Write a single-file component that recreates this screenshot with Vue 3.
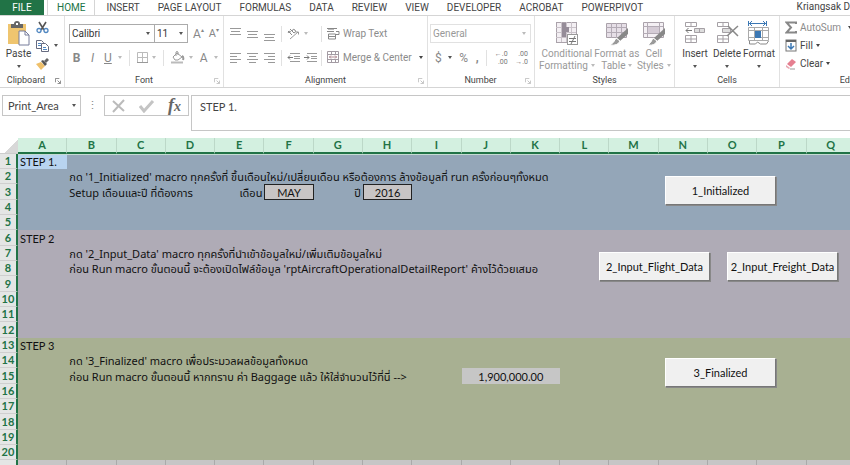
<template>
  <div class="excel">
    <nav class="tabs">
      <button class="tab file">FILE</button>
      <button
          v-for="tab in tabs"
          :key="tab"
          class="tab"
          :class="{ active: activeTab === tab }"
          @click="activeTab = tab"
      >
        {{ tab }}
      </button>
      <span class="user">Kriangsak D</span>
    </nav>

    <div class="ribbon">
      <section class="group clipboard">
        <div class="body">
          <button class="big paste">
            <svg width="24" height="26" viewBox="0 0 24 26">
              <rect x="1" y="3" width="18" height="20" fill="#efc56f" />
              <path d="M4 3h3q0-3 3-3t3 3h3v4H4z" fill="#666" />
              <rect x="9" y="2" width="2" height="2" fill="#fff" />
              <path d="M12 10h6l4 4v10H12z" fill="#fff" stroke="#777c9a" />
              <path d="M18 10v4h4" fill="none" stroke="#777c9a" />
            </svg>
            <span>Paste</span>
            <i class="caret"></i>
          </button>
          <div class="stack">
            <button class="tool" aria-label="Cut">
              <svg width="13" height="13" viewBox="0 0 13 13" fill="none">
                <path d="M3 1l5 8M10 1L5 9" stroke="#555" stroke-width="1.6" />
                <circle cx="3" cy="9.500" r="2" stroke="#4f86c0" stroke-width="1.300" />
                <circle cx="10" cy="9.500" r="2" stroke="#4f86c0" stroke-width="1.300" />
              </svg>
            </button>
            <button class="tool" aria-label="Copy">
              <svg width="13" height="13" viewBox="0 0 13 13" fill="#fff" stroke="#666b80">
                <path d="M.5 1.500h5l2 2v6h-7z" />
                <path d="M2 4.500h3M2 6.500h3" stroke="#4f86c0" />
                <path d="M5.500 4.500h4l3 3v5h-7z" />
                <path d="M7 8.500h3M7 10.500h4" stroke="#4f86c0" />
              </svg>
              <i class="caret"></i>
            </button>
            <button class="tool" aria-label="Format Painter">
              <svg width="13" height="13" viewBox="0 0 13 13">
                <path d="M0 7l5-2 4 4-4 4z" fill="#efc06a" />
                <path d="M5 4l2-1 4 4-2 2z" fill="#555" />
                <path d="M8 4l3-3 2 2-3 3z" fill="#666" />
              </svg>
            </button>
          </div>
        </div>
        <h2>Clipboard</h2>
        <svg class="launcher dark" viewBox="0 0 7 7"><path :d="launcher" /></svg>
      </section>

      <section class="group font">
        <div class="body rows">
          <div class="line">
            <div class="combo font-name">
              <select aria-label="Font"><option>Calibri</option></select>
              <i class="caret"></i>
            </div>
            <div class="combo font-size">
              <select aria-label="Font Size"><option>11</option></select>
              <i class="caret"></i>
            </div>
            <button class="tool letter grow" aria-label="Increase Font Size">A<sup>▴</sup></button>
            <button class="tool letter shrink" aria-label="Decrease Font Size">A<sup>▾</sup></button>
          </div>
          <div class="line formats">
            <button class="tool letter"><b>B</b></button>
            <button class="tool letter"><em>I</em></button>
            <button class="tool letter"><u>U</u><i class="caret pale"></i></button>
            <i class="bar"></i>
            <button class="tool" aria-label="Borders">
              <svg width="11" height="11" viewBox="0 0 11 11" fill="none" stroke="#aaa">
                <path d="M.5 .5h10v10h-10zM5.500 0v11M0 5.500h11" stroke="#bbb" />
                <path d="M0 10.500h11" stroke="#999" />
              </svg>
              <i class="caret pale"></i>
            </button>
            <i class="bar"></i>
            <button class="tool" aria-label="Fill Color">
              <svg width="14" height="13" viewBox="0 0 14 13" fill="none" stroke="#999">
                <path d="M2 6l4-4 5 4-4 3H4zM5 5V1q1-1 2 0v3" />
                <path d="M11 5q2 1 1 4" stroke-width="2" />
                <path d="M0 11.500h12" stroke="#bbb" stroke-width="2" />
              </svg>
              <i class="caret pale"></i>
            </button>
            <button class="tool letter">A<i class="caret pale"></i></button>
          </div>
        </div>
        <h2>Font</h2>
        <svg class="launcher" viewBox="0 0 7 7"><path :d="launcher" /></svg>
      </section>

      <section class="group alignment">
        <div class="body rows">
          <div class="line">
            <button v-for="(d, i) in vertical" :key="i" class="tool align" :aria-label="'Vertical ' + i">
              <svg width="11" height="14" viewBox="0 0 11 14" fill="none" stroke="#999"><path :d="d" /></svg>
            </button>
            <i class="bar tall"></i>
            <button class="tool orient" aria-label="Orientation">
              <svg width="13" height="13" viewBox="0 0 13 13" fill="none" stroke="#888">
                <path d="M1 4l4 4M1 6q1-3 3-1M3 2l4 4q3-1 1-3-2-2-3 1" />
                <path d="M3 12l8-7M9 5h2.500v2.500" stroke="#999" />
              </svg>
              <i class="caret pale"></i>
            </button>
            <i class="bar tall"></i>
            <button class="tool text">
              <svg width="13" height="13" viewBox="0 0 13 13" fill="none" stroke="#888">
                <path d="M0 1.500h10M0 4.500h7M9 4.500h3v3H9M1.500 7v5h7V7zM2 9.500h6" />
                <path d="M1 2.500h6" stroke="#bbb" />
              </svg>
              Wrap Text
            </button>
          </div>
          <div class="line">
            <button v-for="(d, i) in horizontal" :key="i" class="tool align" :aria-label="'Horizontal ' + i">
              <svg width="11" height="11" viewBox="0 0 11 11" fill="none" stroke="#999"><path :d="d" /></svg>
            </button>
            <i class="bar tall"></i>
            <button class="tool indent" aria-label="Decrease Indent">
              <svg width="13" height="11" viewBox="0 0 13 11" fill="none" stroke="#999">
                <path d="M3 1.500h10M7 4.500h6M7 6.500h6M3 9.500h10" />
                <path d="M6 5.500H1M3 3.500l-2 2 2 2" stroke="#777" />
              </svg>
            </button>
            <button class="tool indent" aria-label="Increase Indent">
              <svg width="13" height="11" viewBox="0 0 13 11" fill="none" stroke="#999">
                <path d="M3 1.500h10M7 4.500h6M7 6.500h6M3 9.500h10" />
                <path d="M0 5.500h5M3 3.500l2 2-2 2" stroke="#777" />
              </svg>
            </button>
            <i class="bar tall"></i>
            <button class="tool text">
              <svg width="13" height="13" viewBox="0 0 13 13" fill="none" stroke="#a39ba3">
                <path d="M.5 .5h11v11H.5zM0 3.500h12M0 8.500h12M4.500 0v3M8.500 0v3M4.500 9v3M8.500 9v3" />
                <path d="M2 6h8M4 4.500L2.500 6 4 7.500M8 4.500L9.500 6 8 7.500" stroke="#b08c94" />
              </svg>
              Merge &amp; Center
              <i class="caret"></i>
            </button>
          </div>
        </div>
        <h2>Alignment</h2>
        <svg class="launcher" viewBox="0 0 7 7"><path :d="launcher" /></svg>
      </section>

      <section class="group number">
        <div class="body rows">
          <div class="combo pale">
            <select aria-label="Number Format"><option>General</option></select>
            <i class="caret pale"></i>
          </div>
          <div class="line numbers">
            <button class="tool sign">$<i class="caret"></i></button>
            <button class="tool sign">%</button>
            <button class="tool sign comma">,</button>
            <i class="bar"></i>
            <button class="tool digits"><span>←.0</span><span>.00</span></button>
            <button class="tool digits"><span>.00</span><span>→.0</span></button>
          </div>
        </div>
        <h2>Number</h2>
        <svg class="launcher" viewBox="0 0 7 7"><path :d="launcher" /></svg>
      </section>

      <section class="group styles">
        <div class="body">
          <button class="big dim conditional">
            <svg width="24" height="26" viewBox="0 0 24 26" fill="none">
              <rect x="1.500" y="1.500" width="20" height="20" fill="#f3eff3" stroke="#aaa2aa" />
              <path d="M6.500 1v20M11.500 1v20M16.500 1v20M1 6.500h20M1 11.500h20M1 16.500h20" stroke="#c9c2c9" />
              <path d="M7 2h4v4h3v5h-3v5H7z" fill="#958c98" />
              <rect x="12.500" y="13.500" width="10" height="10" fill="#fff" stroke="#999" />
              <path d="M14 17.500h7M14 20.500h7M20 15l-4 8" stroke="#777" />
            </svg>
            <span>Conditional</span>
            <span>Formatting<i class="caret pale"></i></span>
          </button>
          <button class="big dim format-as">
            <svg width="24" height="26" viewBox="0 0 24 26" fill="none">
              <path d="M1.500 2.500h20v14h-20z" fill="#e6dfe7" stroke="#aaa2aa" />
              <path d="M6.500 2v15M11.500 2v15M16.500 2v15M1 6.500h20M1 11.500h20" stroke="#b3abb5" />
              <path d="M23 7v6l-8 7-3-3z" fill="#888" />
              <path d="M11 17l4 3q-2 5-10 4 4-2 6-7z" fill="#999" stroke="#fff" />
            </svg>
            <span>Format as</span>
            <span>Table<i class="caret pale"></i></span>
          </button>
          <button class="big dim cell-styles">
            <svg width="24" height="26" viewBox="0 0 24 26" fill="none">
              <path d="M1.500 1.500h20v15h-20z" fill="#f4f0f4" stroke="#aaa2aa" />
              <path d="M1 5.500h20M1 12.500h20M5.500 1v15M17.500 1v15" stroke="#b3abb5" />
              <path d="M6 6h11v6H6z" fill="#d5ccd6" />
              <path d="M23 7v6l-8 7-3-3z" fill="#888" />
              <path d="M11 17l4 3q-2 5-9 4 3-2 5-7z" fill="#999" stroke="#fff" />
            </svg>
            <span>Cell</span>
            <span>Styles<i class="caret pale"></i></span>
          </button>
        </div>
        <h2>Styles</h2>
      </section>

      <section class="group cells">
        <div class="body">
          <button class="big">
            <svg width="24" height="26" viewBox="0 0 24 26" fill="none" stroke="#a5a0a5">
              <path d="M2.500 1.500h11v4h-11zM8 1v5M2.500 14.500h11v7h-11zM8 14v8M2 18h12" />
              <path d="M11.500 7.500h10v4h-10zM16.500 7v5" fill="#ddd" />
              <path d="M9 9.500H3M5.500 7L3 9.500 5.500 12" stroke="#777" />
            </svg>
            <span>Insert</span>
            <i class="caret"></i>
          </button>
          <button class="big">
            <svg width="24" height="26" viewBox="0 0 24 26" fill="none" stroke="#a5a0a5">
              <path d="M2.500 1.500h11v4h-11zM8 1v5M2.500 14.500h11v7h-11zM8 14v8M2 18h12" />
              <path d="M7.500 7.500h8v4h-8z" fill="#ddd" />
              <path d="M13 5l10 10M23 5L12 15" stroke="#888" stroke-width="1.500" />
            </svg>
            <span>Delete</span>
            <i class="caret"></i>
          </button>
          <button class="big">
            <svg width="24" height="26" viewBox="0 0 24 26" fill="none" stroke="#888">
              <path d="M2 2.500h17M5 0L2.500 2.500 5 5M16 0l2.500 2.500L16 5M1.500 0v5M19.500 0v5" stroke="#3c78b4" />
              <path d="M1.500 6.500h20v13h-20zM7.500 6v14M15.500 6v14M1 9.500h21M1 16.500h21" stroke="#aaa" />
              <rect x="8" y="10" width="6" height="7" fill="#3c78b4" stroke="none" />
              <path d="M2.500 20v3h6l2-2 3 2h6l2-3" />
            </svg>
            <span>Format</span>
            <i class="caret"></i>
          </button>
        </div>
        <h2>Cells</h2>
      </section>

      <section class="group editing">
        <div class="body rows">
          <button class="tool text sum">
            <svg width="12" height="13" viewBox="0 0 12 13" fill="none" stroke="#888" stroke-width="2">
              <path d="M11 3V1.500H1.500L6 6.500l-4.500 5H11V10" />
            </svg>
            AutoSum
            <i class="caret"></i>
          </button>
          <button class="tool text">
            <svg width="12" height="13" viewBox="0 0 12 13" fill="none">
              <rect x="1" y="1" width="10" height="11" fill="#fff" stroke="#777" />
              <path d="M1 2h10" stroke="#666" stroke-width="2" />
              <path d="M6 4v6M3 7l3 3 3-3" stroke="#3c78b4" stroke-width="1.500" />
            </svg>
            Fill<i class="caret"></i>
          </button>
          <button class="tool text">
            <svg width="12" height="13" viewBox="0 0 12 13">
              <path d="M2 7l5-5 4 3-5 5z" fill="#e57f90" />
              <path d="M1 8l4 3-1 1-3-2z" fill="#e9a5b0" />
              <path d="M5 12h5" stroke="#999" />
            </svg>
            Clear<i class="caret"></i>
          </button>
        </div>
        <h2>Editing</h2>
      </section>
    </div>

    <div class="formula-bar">
      <div class="combo name-box">
        <select aria-label="Name Box"><option>Print_Area</option></select>
        <i class="caret"></i>
      </div>
      <span class="grip">⋮</span>
      <div class="entry">
        <button aria-label="Cancel">
          <svg width="14" height="14" viewBox="0 0 14 14"><path d="M1 2l11 10M12 1L1 13" stroke="#bbb" stroke-width="2" /></svg>
        </button>
        <button aria-label="Enter">
          <svg width="16" height="14" viewBox="0 0 16 14"><path d="M1 7l4 5 9-10" fill="none" stroke="#c4c4c4" stroke-width="3" /></svg>
        </button>
        <button class="fx">f<small>x</small></button>
      </div>
      <textarea v-model="formula" aria-label="Formula Bar"></textarea>
    </div>

    <main class="sheet">
      <table>
        <colgroup>
          <col class="row-head">
          <col v-for="c in columns" :key="c">
        </colgroup>
        <thead>
          <tr>
            <th class="corner"></th>
            <th v-for="c in columns" :key="c">{{ c }}</th>
          </tr>
        </thead>
        <tbody>
          <tr v-for="row in 20" :key="row" :class="band(row)">
            <th>{{ row }}</th>
            <td
                v-for="c in rowColumns(row)"
                :key="c"
                :class="cells[c + row]?.type"
                :colspan="cells[c + row]?.span"
            >{{ cells[c + row]?.text }}</td>
          </tr>
          <tr class="outside">
            <th></th>
            <td v-for="c in columns" :key="c"></td>
          </tr>
        </tbody>
      </table>
      <button class="macro initialized">1_Initialized</button>
      <button class="macro flight">2_Input_Flight_Data</button>
      <button class="macro freight">2_Input_Freight_Data</button>
      <button class="macro finalized">3_Finalized</button>
    </main>
  </div>
</template>

<script setup>
import {ref} from 'vue';

const tabs = ['HOME', 'INSERT', 'PAGE LAYOUT', 'FORMULAS', 'DATA', 'REVIEW', 'VIEW', 'DEVELOPER', 'ACROBAT', 'POWERPIVOT'];
const activeTab = ref('HOME');
const formula = ref('STEP 1.');
const columns = 'ABCDEFGHIJKLMNOPQ'.split('');

const launcher = 'M.5 5V.5H5M3 3l3 3M6.500 3v3.500H3';
const vertical = [
  'M0 1.500h11M1 4.500h9M0 7.500h11',
  'M0 4.500h11M1 7.500h9M0 10.500h11',
  'M0 7.500h11M1 10.500h9M0 13.500h11',
];
const horizontal = [
  'M0 1.500h11M0 4.500h7M0 7.500h11M0 10.500h7',
  'M0 1.500h11M2 4.500h7M0 7.500h11M2 10.500h7',
  'M0 1.500h11M4 4.500h7M0 7.500h11M4 10.500h7',
];

const cells = {
  A1: {text: 'STEP 1.', type: 'selected'},
  B2: {text: "กด '1_Initialized' macro ทุกครั้งที่ ขึ้นเดือนใหม่/เปลี่ยนเดือน หรือต้องการ ล้างข้อมูลที่ run ครั้งก่อนๆทั้งหมด", type: 'thai'},
  B3: {text: 'Setup เดือนและปี ที่ต้องการ', type: 'thai'},
  E3: {text: 'เดือน', type: 'thai right'},
  F3: {text: 'MAY', type: 'boxed'},
  G3: {text: 'ปี', type: 'thai right'},
  H3: {text: '2016', type: 'boxed'},
  A6: {text: 'STEP 2'},
  B7: {text: "กด '2_Input_Data' macro ทุกครั้งที่นำเข้าข้อมูลใหม่/เพิ่มเติมข้อมูลใหม่", type: 'thai'},
  B8: {text: "ก่อน Run macro ขั้นตอนนี้ จะต้องเปิดไฟล์ข้อมูล 'rptAircraftOperationalDetailReport' ค้างไว้ด้วยเสมอ", type: 'thai'},
  A13: {text: 'STEP 3'},
  B14: {text: "กด '3_Finalized' macro เพื่อประมวลผลข้อมูลทั้งหมด", type: 'thai'},
  B15: {text: 'ก่อน Run macro ขั้นตอนนี้ หากทราบ ค่า Baggage แล้ว ให้ใส่จำนวนไว้ที่นี่ -->', type: 'thai'},
  J15: {text: '1,900,000.00', type: 'amount', span: 2},
};

// K15 is merged into J15
const rowColumns = (row) => columns.filter((c) => c + row !== 'K15');

const band = (row) => {
  if (row < 6) return 'blue';
  return row < 13 ? 'purple' : 'green';
};
</script>

<style>
body {
  margin: 0;
  background: #fff;
}
</style>

<style scoped>
.excel {
  min-height: 100vh;
  overflow: hidden;
  font-family: Roboto, "Noto Sans", sans-serif;
  font-size: 10px;
  color: #444;
}

button,
select,
textarea {
  font: inherit;
  color: inherit;
  background: none;
  border: 0;
  border-radius: 0;
  padding: 0;
  margin: 0;
}

svg {
  display: block;
  flex: none;
}

.tabs {
  display: flex;
  height: 15px;
  border-bottom: 1px solid #d5d5d5;
  overflow: hidden;
  white-space: nowrap;
}

.tab {
  padding: 0 9px;
  line-height: 13px;
  height: 15px;
}

.tab.file {
  width: 44px;
  padding: 0;
  margin-right: 3px;
  background: #217346;
  color: #fff;
}

.tab.active {
  color: #217346;
  margin-right: 2px;
  border: solid #d5d5d5;
  border-width: 0 1px;
}

.user {
  margin-left: auto;
  line-height: 13px;
}

.ribbon {
  display: flex;
  height: 71px;
  border-bottom: 1px solid #d5d5d5;
  overflow: hidden;
}

.group {
  position: relative;
  display: flex;
  flex-direction: column;
  flex: none;
  box-sizing: border-box;
  padding: 5px 4px 0;
  border-right: 1px solid #e1e1e1;
}

.group h2 {
  margin: 0;
  font-size: 9px;
  font-weight: 400;
  line-height: 13px;
  text-align: center;
}

.body {
  display: flex;
  flex: 1;
}

.body.rows {
  flex-direction: column;
  gap: 5px;
  padding-top: 3px;
}

.line {
  display: flex;
  align-items: center;
  height: 19px;
}

.launcher {
  position: absolute;
  right: 3px;
  bottom: 3px;
  width: 6px;
  height: 6px;
  fill: none;
  stroke: #bbb;
}

.launcher.dark {
  stroke: #777;
}

.clipboard { width: 65px; }
.clipboard h2 { padding-right: 12px; }
.font { width: 159px; }
.alignment { width: 204px; }
.number { width: 107px; padding: 5px 3px 0 2px; }
.styles { width: 140px; }
.cells { width: 105px; }
.editing { width: 148px; }

.big {
  display: flex;
  flex-direction: column;
  align-items: center;
  line-height: 12px;
  white-space: nowrap;
}

.big svg {
  margin-bottom: 1px;
}

.big .caret {
  margin-top: 5px;
}

.big span .caret {
  margin: 0 0 2px 3px;
}

.dim {
  color: #999;
}

.paste {
  width: 29px;
}

.stack {
  display: flex;
  flex-direction: column;
  gap: 5px;
  padding-left: 3px;
}

.caret {
  display: inline-block;
  flex: none;
  width: 0;
  height: 0;
  border: 2px solid transparent;
  border-top: 3px solid #555;
  border-bottom: 0;
}

.caret.pale {
  border-top-color: #bbb;
}

.tool {
  display: flex;
  align-items: center;
  white-space: nowrap;
}

.stack .tool .caret {
  margin-left: 5px;
}

.combo {
  display: flex;
  align-items: center;
  box-sizing: border-box;
  height: 19px;
  border: 1px solid #ababab;
  padding: 0 4px 0 2px;
  color: #333;
}

.combo select {
  flex: 1;
  min-width: 0;
  appearance: none;
  outline: 0;
}

.combo.pale {
  border-color: #e1e1e1;
  color: #999;
}

.font-name { width: 86px; }
.font-size { width: 33px; border-left: 0; }

.letter {
  color: #888;
  font-size: 12px;
}

.letter sup {
  font-size: 6px;
  line-height: 6px;
  align-self: flex-start;
}

.grow { margin-left: 5px; }
.shrink { margin-left: 5px; font-size: 11px; }

.formats {
  gap: 7px;
  padding-left: 3px;
}

.formats .letter {
  min-width: 9px;
  justify-content: center;
}

.formats .caret {
  margin-left: 6px;
}

.formats .bar + .tool .caret {
  margin-left: 4px;
}

.bar {
  width: 1px;
  height: 16px;
  background: #e1e1e1;
}

.alignment .body {
  padding-left: 2px;
}

.align {
  margin-right: 6px;
}

.bar.tall {
  margin-right: 5px;
}

.orient .caret {
  margin: 0 13px 0 4px;
}

.indent {
  margin-right: 4px;
}

.text {
  gap: 3px;
  color: #8b8b8b;
}

.text .caret {
  margin-left: 4px;
  border-top-color: #444;
}

.numbers {
  justify-content: space-between;
  padding: 0 3px 0 5px;
}

.sign {
  color: #888;
  font-size: 12px;
}

.sign .caret {
  margin-left: 6px;
}

.comma {
  font-weight: 700;
}

.digits {
  flex-direction: column;
  align-items: flex-end;
  font-size: 7px;
  line-height: 8px;
  color: #777;
}

.styles .body {
  padding: 0 2px 0 0;
  justify-content: space-between;
}

.conditional { width: 56px; }
.format-as { width: 44px; }
.cell-styles { width: 30px; }

.cells .body .big {
  flex: 1;
  color: #444;
}

.editing .body.rows {
  gap: 5px;
  padding: 0 0 0 1px;
}

.editing .text {
  color: #444;
  height: 13px;
}

.editing .text.sum {
  color: #8b8b8b;
}

.editing .text:not(.sum) .caret {
  margin-left: 0;
}

.formula-bar {
  display: flex;
  align-items: flex-start;
  padding: 7px 0 7px 2px;
  font-family: Lato, "Noto Sans", sans-serif;
  font-size: 11px;
}

.name-box {
  width: 79px;
  height: 21px;
  border-color: #c6c6c6;
  padding: 0 4px 0 5px;
  color: #444;
}

.grip {
  width: 23px;
  line-height: 20px;
  text-align: center;
  color: #888;
}

.entry {
  display: flex;
  align-items: center;
  justify-content: space-between;
  box-sizing: border-box;
  width: 85px;
  height: 21px;
  padding: 0 7px;
  border: 1px solid #c6c6c6;
  margin-right: 2px;
}

.fx {
  font: italic 700 18px/18px "Liberation Serif", serif;
  color: #666;
}

.fx small {
  font-size: 14px;
}

textarea {
  flex: 1;
  box-sizing: border-box;
  height: 36px;
  padding: 3px 8px;
  border: 1px solid #c6c6c6;
  border-right: 0;
  line-height: 15px;
  resize: none;
  outline: 0;
}

.sheet {
  position: relative;
  font-family: Lato, "Noto Sans", sans-serif;
  font-size: 11px;
  color: #111;
}

table {
  table-layout: fixed;
  width: calc(100% + 6px);
  border-collapse: separate;
  border-spacing: 0;
}

.row-head {
  width: 18px;
}

th,
td {
  padding: 0;
  height: 15px;
  line-height: 15px;
  white-space: nowrap;
}

tr:nth-child(3n) > * {
  height: 16px;
}

thead th {
  box-sizing: border-box;
  height: 16px;
  line-height: 14px;
  background: #d3f0e0;
  color: #217346;
  border-right: 1px solid #bcd8c8;
  border-bottom: 2px solid #217346;
}

thead .corner {
  background: linear-gradient(135deg, #fff 60%, #d8d8d8 60%);
  border-right: 0;
  border-bottom: 1px solid #ccc;
}

tbody th {
  box-sizing: border-box;
  background: #e4e6e5;
  color: #217346;
  border-right: 2px solid #217346;
  border-bottom: 1px solid #cfcfcf;
  line-height: 14px;
}

td {
  padding: 0 2px;
}

.thai {
  font-family: "Noto Sans", "Noto Sans Thai", sans-serif;
}

.blue { background: #94a6b8; }
.purple { background: #afabb6; }
.green { background: #a8b092; }

tbody tr:first-child td {
  box-shadow: inset 0 1px 0 #c5dcd3;
}

.outside td {
  background: #c6c6c6;
  border-right: 1px solid #aaa;
}

.selected {
  background: #b8d4f0;
}

.right {
  text-align: right;
}

.boxed {
  text-align: center;
  background: #c8c5c5;
  outline: 1px solid #222;
  outline-offset: -1px;
}

.amount {
  text-align: center;
  background: #c6c6c6;
}

.macro {
  position: absolute;
  width: 111px;
  height: 29px;
  background: #f0f0f0;
  border: 1px solid #fff;
  border-right-color: #777;
  border-bottom-color: #777;
  box-shadow: 1px 1px 0 #888;
  color: #111;
  white-space: nowrap;
}

.initialized { left: 665px; top: 38px; }
.flight { left: 599px; top: 114px; }
.freight { left: 727px; top: 114px; }
.finalized { left: 665px; top: 220px; }
</style>
